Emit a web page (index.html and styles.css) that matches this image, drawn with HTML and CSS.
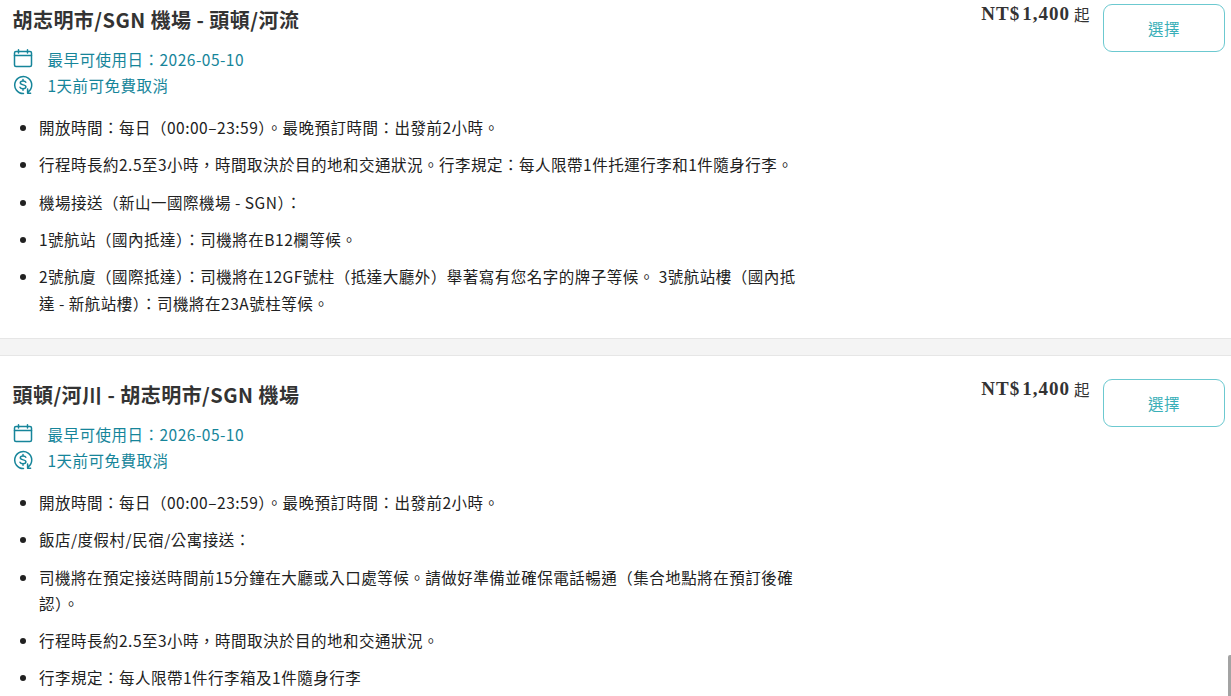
FILE: index.html
```html
<!DOCTYPE html>
<html lang="zh-Hant">
<head>
  <meta charset="UTF-8" />
  <meta name="viewport" content="width=device-width, initial-scale=1.0"/>
  <title>選擇方案</title>
  <link rel="stylesheet" href="styles.css">
</head>
<body>
  <svg class="sprite" width="0" height="0">
    <symbol id="icon-calendar" viewBox="0 0 20 20">
      <rect x="1.5" y="2.5" width="17" height="15" rx="1.5"/>
      <path d="M1.5 6.5h17M5.5 .8v3.2M14.5 .8v3.2"/>
    </symbol>
    <symbol id="icon-refund" viewBox="0 0 20 20">
      <path d="M10.5 18.5A8.5 8.5 0 1 1 15.2 16.9M14.6 14v4.2h3"/>
      <path d="M12.8 7.3c-.4-1-1.3-1.4-2.7-1.4-1.7 0-2.8.7-2.8 1.9 0 2.9 5.6 1.3 5.6 4 0 1.3-1.2 2-2.9 2-1.5 0-2.6-.5-3-1.5M10 4.4v1.5M10 13.8v1.5"/>
    </symbol>
  </svg>

  <div class="package first">
    <div class="info">
      <h2>胡志明市/SGN 機場 - 頭頓/河流</h2>
      <p class="tag"><svg class="icon"><use href="#icon-calendar"/></svg>最早可使用日：2026-05-10</p>
      <p class="tag"><svg class="icon"><use href="#icon-refund"/></svg>1天前可免費取消</p>
      <ul>
        <li>開放時間：每日（00:00–23:59）。最晚預訂時間：出發前2小時。</li>
        <li>行程時長約2.5至3小時，時間取決於目的地和交通狀況。行李規定：每人限帶1件托運行李和1件隨身行李。</li>
        <li>機場接送（新山一國際機場 - SGN）：</li>
        <li>1號航站（國內抵達）：司機將在B12欄等候。</li>
        <li>2號航廈（國際抵達）：司機將在12GF號柱（抵達大廳外）舉著寫有您名字的牌子等候。 3號航站樓（國內抵達 - 新航站樓）：司機將在23A號柱等候。</li>
      </ul>
    </div>
    <div class="action">
      <p class="price"><b>NT$</b><b class="amount">1,400</b> <span>起</span></p>
      <button type="button" class="btn-select">選擇</button>
    </div>
  </div>

  <div class="divider"></div>

  <div class="package">
    <div class="info">
      <h2>頭頓/河川 - 胡志明市/SGN 機場</h2>
      <p class="tag"><svg class="icon"><use href="#icon-calendar"/></svg>最早可使用日：2026-05-10</p>
      <p class="tag"><svg class="icon"><use href="#icon-refund"/></svg>1天前可免費取消</p>
      <ul>
        <li>開放時間：每日（00:00–23:59）。最晚預訂時間：出發前2小時。</li>
        <li>飯店/度假村/民宿/公寓接送：</li>
        <li>司機將在預定接送時間前15分鐘在大廳或入口處等候。請做好準備並確保電話暢通（集合地點將在預訂後確認）。</li>
        <li>行程時長約2.5至3小時，時間取決於目的地和交通狀況。</li>
        <li>行李規定：每人限帶1件行李箱及1件隨身行李</li>
      </ul>
    </div>
    <div class="action">
      <p class="price"><b>NT$</b><b class="amount">1,400</b> <span>起</span></p>
      <button type="button" class="btn-select">選擇</button>
    </div>
  </div>

  <div class="scroll-thumb"></div>
</body>
</html>
```

FILE: styles.css
```css
* { box-sizing: border-box; }

body {
  margin: 0;
  height: 696px;
  overflow: hidden;
  position: relative;
  background: #fff;
  color: #212121;
  font-family: "Noto Sans CJK TC", "Noto Sans", sans-serif;
  font-size: 15.5px;
  letter-spacing: 0.5px;
}

h2, p, ul { margin: 0; }

.sprite { position: absolute; }

.package {
  display: flex;
  justify-content: space-between;
  height: 357px;
  padding: 23px 6px 0 12.5px;
}

.package.first {
  height: 338px;
  padding-top: 4.2px;
}

.info { width: 786px; }

h2 {
  color: #333;
  font-size: 20px;
  font-weight: 700;
  line-height: 32px;
  letter-spacing: 0.45px;
  margin-bottom: 10px;
}

.tag {
  display: flex;
  align-items: center;
  height: 26px;
  color: #16859a;
}

.icon {
  width: 20px;
  height: 20px;
  margin-right: 15px;
  fill: none;
  stroke: #16859a;
  stroke-width: 1.5;
  stroke-linecap: round;
  stroke-linejoin: round;
}

ul {
  list-style: none;
  padding: 0 0 0 26.5px;
  margin-top: 16px;
}

li {
  position: relative;
  line-height: 26.35px;
  margin-bottom: 10.92px;
}

li::before {
  content: "";
  position: absolute;
  left: -19px;
  top: 11px;
  width: 6px;
  height: 6px;
  border-radius: 50%;
  background: #212121;
}

.action {
  display: flex;
  align-items: flex-start;
}

.price {
  margin-right: 13px;
  line-height: 20px;
  color: #333;
  white-space: nowrap;
}

.price b {
  font-family: "Liberation Serif", serif;
  font-size: 19px;
  letter-spacing: 1px;
  position: relative;
  top: -1px;
}

.price .amount { margin-left: 2px; }

.btn-select {
  width: 122px;
  height: 48px;
  border: 1px solid #6cc9d0;
  border-radius: 9px;
  background: #fff;
  color: #3aafb8;
  font: inherit;
  letter-spacing: 0.5px;
}

.divider {
  height: 18px;
  background: #f4f4f4;
  border-top: 1px solid #e6e6e6;
  border-bottom: 1px solid #e6e6e6;
}

.scroll-thumb {
  position: absolute;
  right: 0;
  top: 655px;
  width: 3px;
  height: 41px;
  background: #a3a3a3;
  border-top-left-radius: 2px;
}
```
